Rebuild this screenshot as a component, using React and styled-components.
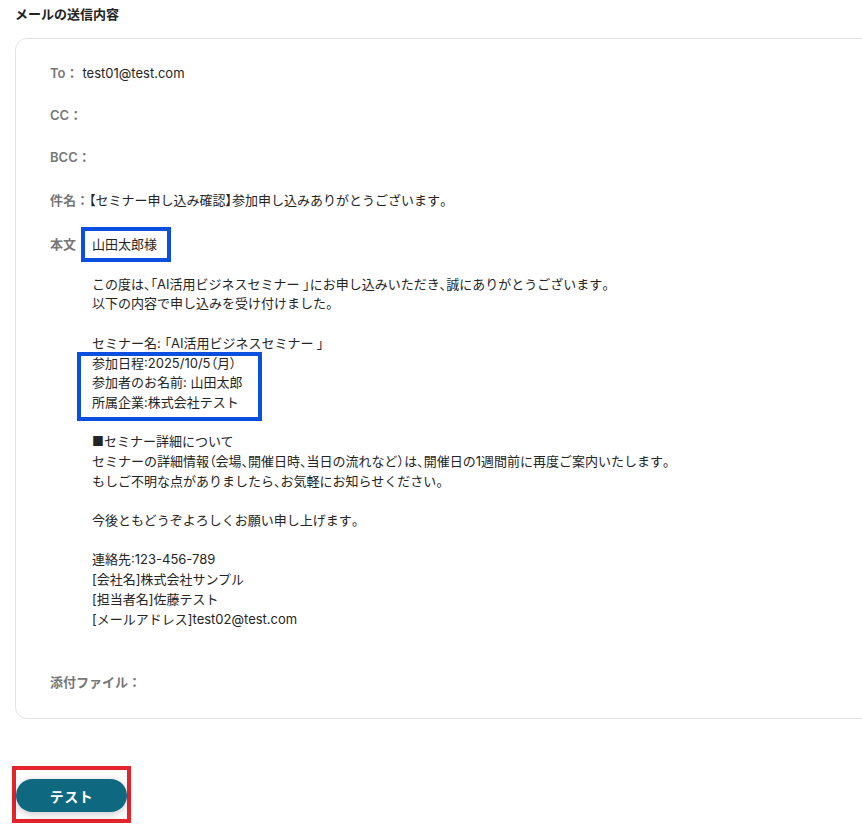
import React from "react";
import styled, { createGlobalStyle } from "styled-components";

const GlobalStyle = createGlobalStyle`
    html, body {
        margin: 0;
        padding: 0;
        background: #ffffff;
        overflow: hidden;
    }
    body {
        font-family: Inter, "Noto Sans CJK JP", sans-serif;
        color: #242424;
    }
`;

const Page = styled.div`
    width: 862px;
    height: 827px;
    position: relative;
    overflow: hidden;
    padding: 4px 0 0 15px;
    box-sizing: border-box;
`;

const Title = styled.h2`
    margin: 0 0 14px;
    font-size: 13px;
    line-height: 20px;
    font-weight: 700;
    color: #222;
`;

const Card = styled.section`
    width: 900px;
    box-sizing: border-box;
    border: 1px solid #e3e3e3;
    border-radius: 12px;
    padding: 25px 34px 25px 34px;
`;

const Field = styled.div`
    display: flex;
    align-items: flex-start;
    font-size: 13px;
    line-height: 19.7px;
    margin-top: ${(p) => p.$gap || 0}px;
`;

const Label = styled.span`
    color: #777777;
    font-weight: 600;
    flex-shrink: 0;
    margin-right: ${(p) => p.$space || 0}px;
`;

const Value = styled.span`
    color: #242424;
`;

/* punctuation set half-width, like a yakuhan font */
const Punct = styled.span`
    font-feature-settings: "palt";
`;

const Body = styled.div`
    position: relative;
    margin-left: 16px;
    color: #242424;
`;

const Line = styled.div`
    min-height: 19.7px;
    white-space: pre;
`;

const Highlight = styled.div`
    position: absolute;
    border: 4px solid #0a4fe0;
    box-sizing: border-box;
    pointer-events: none;
`;

const ActionBar = styled.div`
    margin: 47px 0 0 -3px;
`;

const RedFrame = styled.div`
    display: inline-block;
    border: 4px solid #e3242b;
    padding: 9px 0 7px;
    background: linear-gradient(to bottom, #ffffff 0, #ffffff 48px, #f7f7f7 48px);
`;

const TestButton = styled.button`
    display: block;
    width: 111px;
    height: 33px;
    border: none;
    border-radius: 17px;
    background: #0d6880;
    color: #ffffff;
    font-family: Inter, "Noto Sans CJK JP", sans-serif;
    font-size: 14px;
    font-weight: 700;
    letter-spacing: 0.5px;
    box-shadow: 0 2px 8px rgba(0, 0, 0, 0.22);
    cursor: pointer;
`;

const FooterStrip = styled.div`
    position: absolute;
    left: 0;
    right: 0;
    bottom: 0;
    height: 8px;
    background: #f8f8f8;
    z-index: -1;
`;

const PUNCT = /([、。「」【】（）])/;

const Yaku = ({ text }) =>
    text.split(PUNCT).map((part, i) =>
        PUNCT.test(part) ? <Punct key={i}>{part}</Punct> : part
    );

const bodyLines = [
    "山田太郎様",
    "",
    "この度は、「AI活用ビジネスセミナー 」にお申し込みいただき、誠にありがとうございます。",
    "以下の内容で申し込みを受け付けました。",
    "",
    "セミナー名: 「AI活用ビジネスセミナー 」",
    "参加日程:2025/10/5（月）",
    "参加者のお名前: 山田太郎",
    "所属企業:株式会社テスト",
    "",
    "■セミナー詳細について",
    "セミナーの詳細情報（会場、開催日時、当日の流れなど）は、開催日の1週間前に再度ご案内いたします。",
    "もしご不明な点がありましたら、お気軽にお知らせください。",
    "",
    "今後ともどうぞよろしくお願い申し上げます。",
    "",
    "連絡先:123-456-789",
    "[会社名]株式会社サンプル",
    "[担当者名]佐藤テスト",
    "[メールアドレス]test02@test.com",
];

const App = () => {
    return (
        <Page>
            <GlobalStyle />
            <Title>メールの送信内容</Title>
            <Card>
                <Field>
                    <Label $space={4}>To：</Label>
                    <Value>test01@test.com</Value>
                </Field>
                <Field $gap={22.5}>
                    <Label>CC：</Label>
                </Field>
                <Field $gap={22.5}>
                    <Label>BCC：</Label>
                </Field>
                <Field $gap={22.5}>
                    <Label>件名：</Label>
                    <Value>
                        <Yaku text="【セミナー申し込み確認】参加申し込みありがとうございます。" />
                    </Value>
                </Field>
                <Field $gap={25}>
                    <Label>本文</Label>
                    <Body>
                        {bodyLines.map((text, i) => (
                            <Line key={i}>
                                <Yaku text={text} />
                            </Line>
                        ))}
                        <Highlight style={{ top: -8, left: -11, width: 90, height: 35 }} />
                        <Highlight style={{ top: 117, left: -15, width: 185, height: 69 }} />
                    </Body>
                </Field>
                <Field $gap={44}>
                    <Label>添付ファイル：</Label>
                </Field>
            </Card>
            <ActionBar>
                <RedFrame>
                    <TestButton>テスト</TestButton>
                </RedFrame>
            </ActionBar>
            <FooterStrip />
        </Page>
    );
};

export default App;
